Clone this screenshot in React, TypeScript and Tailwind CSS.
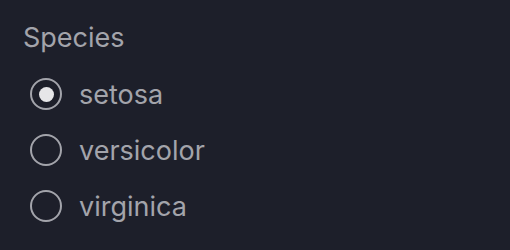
import { useState } from "react";

const OPTIONS = ["setosa", "versicolor", "virginica"];

export default function App() {
  const [value, setValue] = useState("setosa");

  return (
    <div className="h-[250px] w-[510px] bg-[#1d1f2a] px-[23px] pt-[21px] font-['Inter',sans-serif] text-[#a3a4ab]">
      <p className="text-[27px] leading-[33px]">Species</p>
      <div className="mt-3 flex flex-col pl-[7px]">
        {OPTIONS.map((opt) => {
          const checked = value === opt;
          return (
            <label key={opt} className="flex h-14 cursor-pointer items-center gap-[17px]" onClick={() => setValue(opt)}>
              <span className="flex h-8 w-8 shrink-0 items-center justify-center rounded-full border-2 border-[#a3a4ab]">
                {checked && <span className="h-[15px] w-[15px] rounded-full bg-[#e6e6e8]" />}
              </span>
              <span className="text-[27px] leading-[33px]">{opt}</span>
            </label>
          );
        })}
      </div>
    </div>
  );
}
